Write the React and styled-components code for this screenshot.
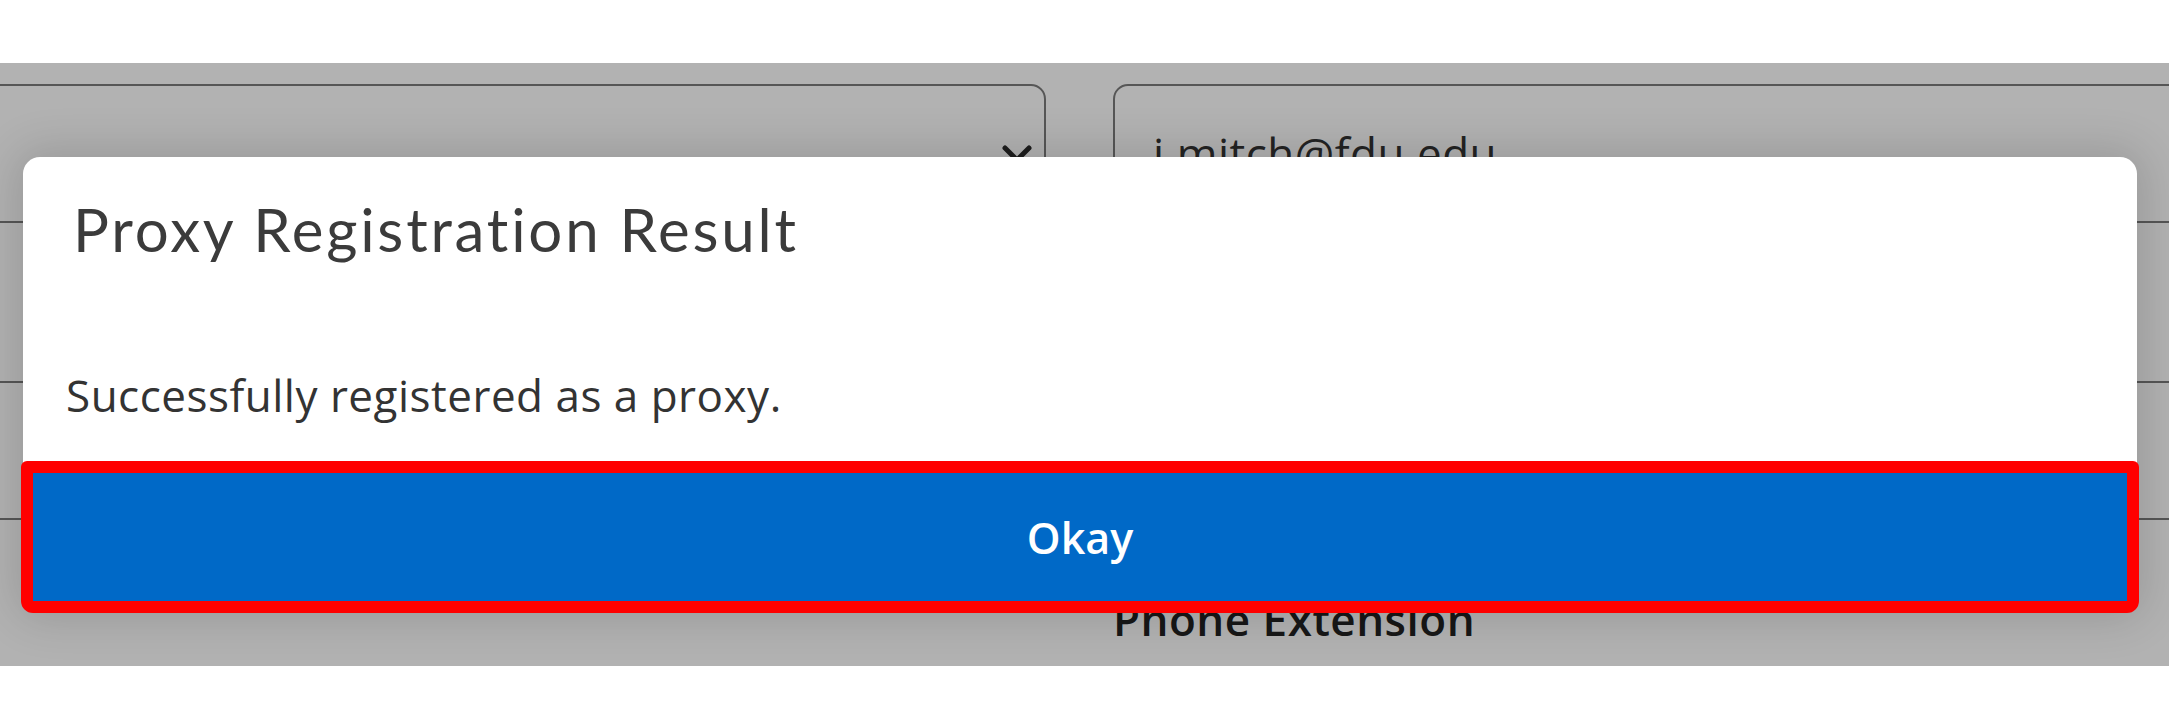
import React from "react";
import styled, { createGlobalStyle } from "styled-components";

const GlobalStyle = createGlobalStyle`
  html, body {
    margin: 0;
    padding: 0;
    background: #ffffff;
  }
  body {
    font-family: "Open Sans", "Liberation Sans", sans-serif;
  }
`;

const Page = styled.div`
  width: 100%;
  padding-top: 63px;
  background: #ffffff;
`;

const Screen = styled.div`
  position: relative;
  height: 603px;
  overflow: hidden;
  background: #ffffff;
`;

const Form = styled.div`
  display: grid;
  grid-template-columns: 1086px 1fr;
  column-gap: 67px;
  margin: 0 -40px;
  padding-top: 21px;
`;

const Column = styled.div`
  display: flex;
  flex-direction: column;
`;

const Label = styled.div`
  min-height: 63px;
  margin: 68px 0 27px;
  font-size: 44px;
  letter-spacing: 0.5px;
  line-height: 63px;
  font-weight: 600;
  color: #222;
`;

const Field = styled.div`
  position: relative;
  display: flex;
  align-items: center;
  height: 139px;
  box-sizing: border-box;
  border: 2px solid #7c7c7c;
  border-radius: 15px;
  padding: 0 38px;
  font-size: 44px;
  letter-spacing: 0.5px;
  line-height: 63px;
  color: #333;
  background: #fff;
`;

const Chevron = styled.svg`
  position: absolute;
  right: 12px;
  top: 59px;
  width: 30px;
  height: 20px;
`;

const Backdrop = styled.div`
  position: absolute;
  inset: 0;
  background: rgba(0, 0, 0, 0.3);
`;

const Modal = styled.div`
  position: absolute;
  left: 23px;
  right: 32px;
  top: 94px;
  display: flex;
  flex-direction: column;
  background: #ffffff;
  border-radius: 17px;
  box-shadow: 0 0 45px 8px rgba(0, 0, 0, 0.14);
`;

const Title = styled.h2`
  margin: 0;
  padding: 38px 50px 0;
  font-family: Lato, "Open Sans", sans-serif;
  font-weight: 400;
  font-size: 60px;
  letter-spacing: 2.8px;
  line-height: 68px;
  color: #3b3b3b;
`;

const Message = styled.p`
  margin: 101px 0 34px;
  padding: 0 43px;
  font-size: 44px;
  letter-spacing: 0.5px;
  line-height: 63px;
  color: #333;
`;

const OkayButton = styled.button`
  display: flex;
  align-items: center;
  justify-content: center;
  height: 152px;
  margin: 0 -2px -2px;
  border: 12px solid #ff0000;
  border-radius: 6px 6px 12px 12px;
  background: #0069c7;
  color: #ffffff;
  font-family: "Open Sans", sans-serif;
  font-weight: 600;
  font-size: 43px;
  cursor: pointer;
`;

const App = () => {
  return (
    <Page>
      <GlobalStyle />
      <Screen>
        <Form>
          <Column>
            <Field>
              <Chevron viewBox="0 0 30 20">
                <polyline
                  points="3,3 15,15 27,3"
                  fill="none"
                  stroke="#2a2a2a"
                  strokeWidth="5"
                  strokeLinecap="round"
                  strokeLinejoin="round"
                />
              </Chevron>
            </Field>
            <Label />
            <Field />
          </Column>
          <Column>
            <Field>j.mitch@fdu.edu</Field>
            <Label>Phone Number</Label>
            <Field />
            <Label>Phone Extension</Label>
          </Column>
        </Form>
        <Backdrop />
        <Modal>
          <Title>Proxy Registration Result</Title>
          <Message>Successfully registered as a proxy.</Message>
          <OkayButton>Okay</OkayButton>
        </Modal>
      </Screen>
    </Page>
  );
};

export default App;
